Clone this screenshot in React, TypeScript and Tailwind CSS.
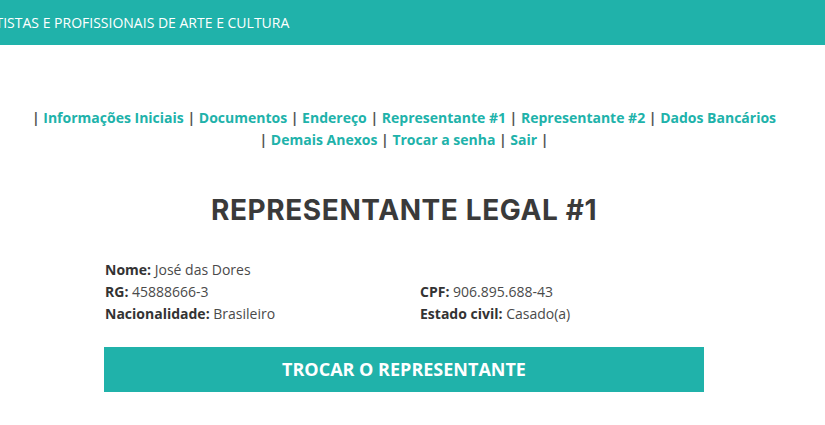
import React from 'react';

const links = [
  'Informações Iniciais',
  'Documentos',
  'Endereço',
  'Representante #1',
  'Representante #2',
  'Dados Bancários',
  'Demais Anexos',
  'Trocar a senha',
  'Sair',
];

const Field: React.FC<{ label: string; value: string }> = ({ label, value }) => (
  <p className="text-[#4a4a4a]">
    <span className="font-bold text-[#333]">{label}:</span> {value}
  </p>
);

export default function App() {
  return (
    <div className="min-h-[425px] bg-white font-['Open_Sans',sans-serif] text-[#3a3a3a]">
      <header className="h-[45px] bg-[#20b2aa] flex items-center overflow-hidden">
        <span className="-ml-[22px] text-[14px] text-white whitespace-nowrap">
          ARTISTAS E PROFISSIONAIS DE ARTE E CULTURA
        </span>
      </header>

      <div className="w-[808px]">
        <nav className="mt-[62px] px-[30px] text-center text-[14px] leading-[22px] font-bold text-[#555]">
          {links.map((l, i) => (
            <React.Fragment key={l}>
              {i === 0 ? '| ' : ' | '}
              <a href="#" className="text-[#20b2aa]">{l}</a>
            </React.Fragment>
          ))}
          {' |'}
        </nav>

        <h1 className="mt-[41px] text-center font-['Inter',sans-serif] text-[28px] leading-[36px] font-bold tracking-[0.6px] text-[#3a3a3a]">
          REPRESENTANTE LEGAL #1
        </h1>

        <div className="mx-auto mt-[31px] w-[600px]">
          <div className="pl-[1px] text-[14px] leading-[22px]">
            <Field label="Nome" value="José das Dores" />
            <div className="grid grid-cols-[315px_1fr]">
              <Field label="RG" value="45888666-3" />
              <Field label="CPF" value="906.895.688-43" />
              <Field label="Nacionalidade" value="Brasileiro" />
              <Field label="Estado civil" value="Casado(a)" />
            </div>
          </div>
          <button className="mt-[22px] h-[45px] w-full bg-[#20b2aa] text-[18px] font-bold text-white">
            TROCAR O REPRESENTANTE
          </button>
        </div>
      </div>
    </div>
  );
}
